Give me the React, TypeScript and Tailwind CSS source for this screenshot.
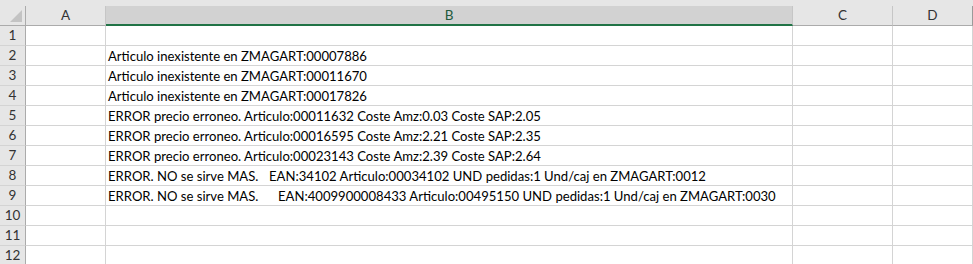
import React from 'react';

const font = { fontFamily: 'Lato, "Liberation Sans", Arial, sans-serif' };

type Row = { n: number; text?: string; tail?: string; lead?: number };

const rows: Row[] = [
  { n: 1 },
  { n: 2, text: 'Articulo inexistente en ZMAGART:00007886' },
  { n: 3, text: 'Articulo inexistente en ZMAGART:00011670' },
  { n: 4, text: 'Articulo inexistente en ZMAGART:00017826' },
  { n: 5, text: 'ERROR precio erroneo. Articulo:00011632 Coste Amz:0.03 Coste SAP:2.05' },
  { n: 6, text: 'ERROR precio erroneo. Articulo:00016595 Coste Amz:2.21 Coste SAP:2.35' },
  { n: 7, text: 'ERROR precio erroneo. Articulo:00023143 Coste Amz:2.39 Coste SAP:2.64' },
  { n: 8, text: 'ERROR. NO se sirve MAS.', tail: 'EAN:34102 Articulo:00034102 UND pedidas:1 Und/caj en ZMAGART:0012', lead: 161 },
  { n: 9, text: 'ERROR. NO se sirve MAS.', tail: 'EAN:4009900008433 Articulo:00495150 UND pedidas:1 Und/caj en ZMAGART:0030', lead: 170 },
  { n: 10 },
  { n: 11 },
  { n: 12 },
];

export default function App() {
  return (
    <div className="w-[973px] h-[264px] overflow-hidden bg-white text-black" style={font}>
      {/* top strip above the headers */}
      <div className="h-[6px] bg-[#e6e6e6]" />

      {/* column headers */}
      <div className="flex h-[20px]">
        <div className="w-[26px] shrink-0 bg-[#e6e6e6] border-r border-b border-[#ababab] relative">
          <div className="absolute right-[3px] bottom-[3px] w-0 h-0 border-l-[12px] border-l-transparent border-b-[12px] border-b-[#c3c3c3]" />
        </div>
        <div className="w-[80px] shrink-0 bg-[#e6e6e6] border-r border-r-[#c6c6c6] border-b border-b-[#ababab] flex items-center justify-center text-[13.5px] text-[#333]">A</div>
        <div className="w-[687px] shrink-0 bg-[#d2d2d2] border-r border-r-[#c6c6c6] border-b-2 border-b-[#217346] flex items-center justify-center text-[13.5px] text-[#215a3c] pt-[1px]">B</div>
        <div className="w-[100px] shrink-0 bg-[#e6e6e6] border-r border-r-[#c6c6c6] border-b border-b-[#ababab] flex items-center justify-center text-[13.5px] text-[#333]">C</div>
        <div className="w-[80px] shrink-0 bg-[#e6e6e6] border-r border-r-[#9a9a9a] border-b border-b-[#ababab] flex items-center justify-center text-[13.5px] text-[#333]">D</div>
      </div>

      {/* rows */}
      {rows.map(r => (
        <div key={r.n} className="flex h-[20px]">
          <div className="w-[26px] shrink-0 bg-[#e6e6e6] border-r border-r-[#ababab] border-b border-b-[#d4d4d4] flex items-center justify-center text-[13.5px] text-[#333]">
            {r.n}
          </div>
          <div className="w-[80px] shrink-0 border-r border-b border-[#d4d4d4]" />
          <div className="w-[687px] shrink-0 border-r border-b border-[#d4d4d4] flex items-end pl-[2px] pb-[2px] text-[13.1px] leading-none whitespace-pre">
            {r.tail ? (
              <>
                <span className="inline-block shrink-0" style={{ width: r.lead }}>{r.text}</span>
                <span>{r.tail}</span>
              </>
            ) : (
              r.text
            )}
          </div>
          <div className="w-[100px] shrink-0 border-r border-b border-[#d4d4d4]" />
          <div className="w-[80px] shrink-0 border-r border-b border-[#d4d4d4]" />
        </div>
      ))}
    </div>
  );
}
